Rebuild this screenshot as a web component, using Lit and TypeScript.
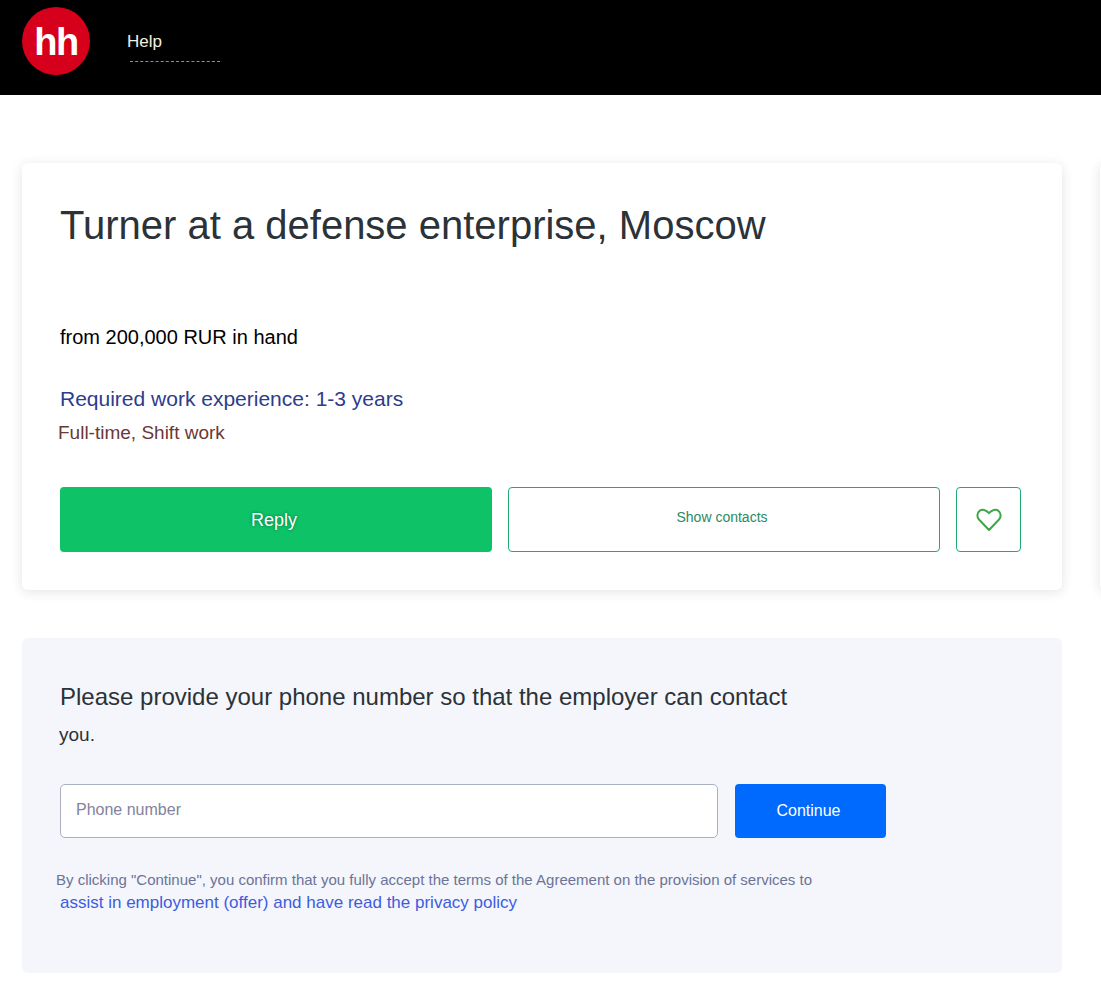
import { LitElement, html, css } from "lit";
import { customElement } from "lit/decorators.js";

@customElement("app-root")
export class AppRoot extends LitElement {
  static styles = css`
    :host { display: block; width: 1101px; height: 984px; overflow: hidden; background: #fff; font-family: "Liberation Sans", Arial, sans-serif; color: #2b3238; }
    * { box-sizing: border-box; }
    .header { height: 95px; background: #000; display: flex; align-items: flex-start; padding: 7px 0 0 22px; }
    .logo { width: 68px; height: 68px; flex: none; }
    .logo-text { font: bold 38px "Liberation Sans", Arial, sans-serif; fill: #fff; letter-spacing: -1.5px; }
    .help { margin: 25px 0 0 40px; width: 90px; color: #f5f1e0; font-size: 17px; line-height: 18px; height: 30px; border-bottom: 1px dashed #8f8f8f; }
    .help span { display: block; margin: 1px 0 0 -3px; }
    .row { display: flex; gap: 38px; padding: 68px 0 0 22px; width: 1200px; }
    .card { flex: none; width: 1040px; height: 427px; background: #fff; border-radius: 6px; box-shadow: 0 2px 12px rgba(40, 50, 70, .13); padding: 38px 38px 0; }
    .side { flex: none; width: 100px; height: 427px; background: #fff; border-radius: 6px; box-shadow: 0 2px 12px rgba(40, 50, 70, .13); }
    h1 { margin: 0; font-weight: 400; font-size: 40px; line-height: 48px; color: #2b3238; }
    .salary { margin: 76px 0 0; font-size: 20px; line-height: 24px; color: #000; }
    .exp { margin: 37px 0 0; font-size: 21px; line-height: 26px; color: #2d3c8c; }
    .type { margin: 10px 0 0 -2px; font-size: 19px; line-height: 22px; color: #6b3838; }
    .actions { display: flex; gap: 16px; margin-top: 43px; }
    .btn { height: 65px; width: 432px; border-radius: 4px; display: flex; align-items: center; justify-content: center; }
    .reply { background: #0dc267; color: #fff; font-size: 18px; text-shadow: 0 0 3px rgba(0, 90, 50, .8); padding: 1px 4px 0 0; }
    .contacts { border: 1px solid #22a873; color: #2a8a63; font-size: 14px; padding: 0 4px 5px 0; }
    .fav { width: 65px; border: 1px solid #22a873; border-radius: 4px; height: 65px; display: flex; align-items: center; justify-content: center; }
    .panel { margin: 48px 0 0 22px; width: 1040px; height: 335px; background: #f4f6fb; border-radius: 6px; padding: 41px 38px 0; }
    .q { margin: 0; width: 740px; font-size: 24px; line-height: 36px; color: #2b3238; }
    .q span { margin-left: -1px; display: inline-block; font-size: 19px; line-height: 1; }
    .form { display: flex; gap: 17px; margin-top: 33px; }
    .input { width: 658px; height: 54px; background: #fff; border: 1px solid #a9afc0; border-radius: 5px; padding: 0 15px 2px; display: flex; align-items: center; color: #83839a; font-size: 16px; }
    .go { width: 151px; height: 54px; background: #0069fe; color: #fff; border-radius: 4px; display: flex; align-items: center; justify-content: center; font-size: 16px; padding-right: 4px; }
    .terms { margin: 33px 0 0 -4px; font-size: 15px; line-height: 18px; color: #6c7398; white-space: nowrap; }
    .link { margin: 4px 0 0; font-size: 17px; line-height: 20px; color: #3d5ce0; }
  `;

  render() {
    return html`
      <div class="header">
        <svg class="logo" viewBox="0 0 68 68">
          <circle cx="34" cy="34" r="34" fill="#d6001c"></circle>
          <text class="logo-text" x="34" y="48" text-anchor="middle">hh</text>
        </svg>
        <div class="help"><span>Help</span></div>
      </div>
      <div class="row">
        <div class="card">
          <h1>Turner at a defense enterprise, Moscow</h1>
          <p class="salary">from 200,000 RUR in hand</p>
          <p class="exp">Required work experience: 1-3 years</p>
          <p class="type">Full-time, Shift work</p>
          <div class="actions">
            <div class="btn reply">Reply</div>
            <div class="btn contacts">Show contacts</div>
            <div class="fav">
              <svg width="26" height="24" viewBox="0 0 26 24" fill="none" stroke="#3fa648" stroke-width="2" stroke-linejoin="round">
                <path d="M13 22 L3 11.5 C0.6 8.8 1 5 3.4 3 C6 1 10 1.4 13 5.2 C16 1.4 20 1 22.6 3 C25 5 25.4 8.8 23 11.5 Z"></path>
              </svg>
            </div>
          </div>
        </div>
        <div class="side"></div>
      </div>
      <div class="panel">
        <p class="q">Please provide your phone number so that the employer can contact <span>you.</span></p>
        <div class="form">
          <div class="input">Phone number</div>
          <div class="go">Continue</div>
        </div>
        <div class="terms">By clicking "Continue", you confirm that you fully accept the terms of the Agreement on the provision of services to</div>
        <div class="link">assist in employment (offer) and have read the privacy policy</div>
      </div>
    `;
  }
}
